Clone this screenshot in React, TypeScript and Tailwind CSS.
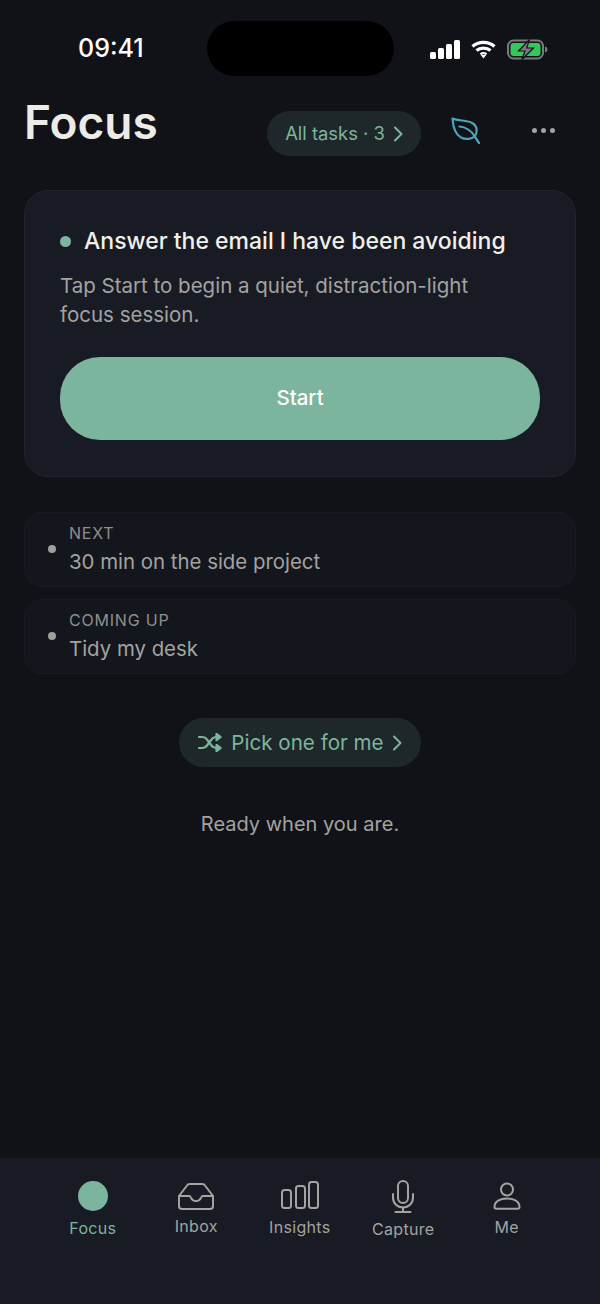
import type { ReactNode } from 'react';

function StatusIcons() {
  return (
    <div className="flex items-center">
      <svg width="30" height="19" viewBox="0 0 30 19" fill="#fff">
        <rect x="0" y="12" width="6" height="7" rx="1.5" />
        <rect x="8" y="8" width="6" height="11" rx="1.5" />
        <rect x="16" y="4" width="6" height="15" rx="1.5" />
        <rect x="24" y="0" width="6" height="19" rx="1.5" />
      </svg>
      <svg className="ml-[11px]" width="25" height="19" viewBox="0 0 25 19" fill="none" stroke="#fff" strokeWidth="3.200">
        <path d="M1.500 6.500C7.500 1 17.500 1 23.500 6.500" />
        <path d="M5.500 10.500c3.700-3.300 10.300-3.300 14 0" />
        <path d="M9.500 14.300c1.700-1.300 4.300-1.300 6 0" strokeWidth="2.200" />
        <path d="M9.800 15h5.400l-2.700 3.500z" fill="#fff" stroke="none" />
      </svg>
      <svg className="ml-[11px]" width="41" height="21" viewBox="0 0 41 21" fill="none">
        <rect x="1" y="1.500" width="35" height="18" rx="5.500" stroke="#77797c" strokeWidth="2" />
        <rect x="3.500" y="4" width="30" height="13" rx="3" fill="#34c759" />
        <path d="M38 7.500c1.700.4 2.500 1.500 2.500 3s-.8 2.600-2.500 3z" fill="#77797c" />
        <path d="M22.500 0.500L11.500 12h6.500l-3 8.500L26.500 9h-6.800z" fill="#77797c" stroke="#111318" strokeWidth="1.200" />
      </svg>
    </div>
  );
}

function Chevron({ className }: { className: string }) {
  return (
    <svg className={className} width="10" height="16" viewBox="0 0 10 16" fill="none" stroke="currentColor" strokeWidth="2" strokeLinecap="round" strokeLinejoin="round">
      <path d="M2 1.500L8.500 8L2 14.500" />
    </svg>
  );
}

function LeafIcon() {
  return (
    <svg className="mt-[6px] ml-[30px]" width="30" height="27" viewBox="0 0 30 27" fill="none" stroke="#4ea5b8" strokeWidth="2.200" strokeLinecap="round" strokeLinejoin="round">
      <path d="M1.500 1.500C8 4.500 16 2.500 22 6.500c4.500 3 4.500 9 2 12.500c-3 3-9 4-14 1.500C4.500 17.500 2 10 1.500 1.500z" />
      <path d="M8.500 9.500c6 .5 12 4.500 15 9.500c1 1.500 3 5 4.500 7" />
    </svg>
  );
}

function ShuffleIcon() {
  return (
    <svg width="24" height="19" viewBox="0 0 24 19" fill="none" stroke="currentColor" strokeWidth="2.200" strokeLinecap="round" strokeLinejoin="round">
      <path d="M1 4h3.500c2 0 3.300.8 4.500 2.500l4.500 6c1.200 1.700 2.500 2.500 4.500 2.500H21" />
      <path d="M1 15h3.500c2 0 3.300-.8 4.500-2.500l4.500-6C14.700 4.800 16 4 18 4h3" />
      <path d="M18.500 1l4 3l-4 3z" fill="currentColor" />
      <path d="M18.500 12l4 3l-4 3z" fill="currentColor" />
    </svg>
  );
}

function InboxIcon() {
  return (
    <svg width="36" height="27" viewBox="0 0 36 27" fill="none" stroke="#a3a3a0" strokeWidth="2" strokeLinejoin="round" strokeLinecap="round">
      <path d="M1 13L9 2.500C9.500 1.700 10.300 1 11.500 1h13c1.200 0 2 .7 2.500 1.500L35 13" />
      <path d="M1 13v10c0 1.700 1.300 3 3 3h28c1.700 0 3-1.300 3-3V13h-10c-1 0-1.500.5-1.800 1.300C22.500 16 21 18 18 18s-4.500-2-5.200-3.700C12.500 13.500 12 13 11 13z" />
    </svg>
  );
}

function BarsIcon() {
  return (
    <svg width="38" height="28" viewBox="0 0 38 28" fill="none" stroke="#a3a3a0" strokeWidth="2">
      <rect x="1" y="9" width="9" height="18" rx="2.500" />
      <rect x="15" y="5" width="9" height="22" rx="2.500" />
      <rect x="28" y="1" width="9" height="26" rx="2.500" />
    </svg>
  );
}

function MicIcon() {
  return (
    <svg width="22" height="33" viewBox="0 0 22 33" fill="none" stroke="#a3a3a0" strokeWidth="2" strokeLinecap="round">
      <rect x="6" y="1" width="10" height="22" rx="5" />
      <path d="M1 14v3.500C1 23.500 5.500 27.500 11 27.500s10-4 10-10V14" />
      <path d="M11 27.500V32M3.500 32h15" />
    </svg>
  );
}

function PersonIcon() {
  return (
    <svg width="28" height="28" viewBox="0 0 28 28" fill="none" stroke="#a3a3a0" strokeWidth="2">
      <circle cx="14" cy="7.500" r="6" />
      <path d="M1.500 25c0-5.500 5.500-8.500 12.500-8.500s12.500 3 12.500 8.500c0 1-.7 1.800-1.800 1.800H3.300c-1.100 0-1.800-.8-1.800-1.800z" />
    </svg>
  );
}

function QueueRow({ label, title }: { label: string; title: string }) {
  return (
    <div className="flex h-[75px] items-center rounded-[18px] border border-[#181b23] bg-[#13161c] pl-[23px]">
      <span className="mb-[2px] h-2 w-2 rounded-full bg-[#a09f9b]" />
      <div className="ml-[13px] pt-[1px]">
        <p className="text-[16px] leading-[20px] tracking-[0.8px] text-[#8f8f8c]">{label}</p>
        <p className="mt-[4px] text-[20.400px] leading-[30px] text-[#a3a3a0]">{title}</p>
      </div>
    </div>
  );
}

function TabItem({ icon, label, active, iconClass, labelClass }: { icon: ReactNode; label: string; active?: boolean; iconClass: string; labelClass: string }) {
  return (
    <div className="flex w-[103.500px] flex-col items-center">
      <div className={`flex items-end justify-center ${iconClass}`}>{icon}</div>
      <span className={`text-[16px] leading-[20px] tracking-[0.3px] ${labelClass} ${active ? 'text-[#7cb59d]' : 'text-[#a3a3a0]'}`}>{label}</span>
    </div>
  );
}

export default function App() {
  return (
    <div className="flex h-[1304px] w-[600px] flex-col overflow-hidden bg-[#101217] font-['Inter',sans-serif]">
      {/* status bar */}
      <div className="flex h-[76px] items-start pt-[21px]">
        <div className="w-[207px] pt-[11px] pl-[78px] text-[25px] leading-[32px] font-medium text-white">09:41</div>
        <div className="h-[55px] w-[187px] rounded-[28px] bg-black" />
        <div className="pt-[18px] pl-[36px]">
          <StatusIcons />
        </div>
      </div>

      {/* header */}
      <div className="mt-[18px] flex h-[60px] items-start pl-[24px]">
        <h1 className="w-[243px] text-[46px] leading-[56px] font-semibold text-[#ecebe6]">Focus</h1>
        <div className="mt-[17px] flex h-[45px] w-[154px] items-center justify-center gap-[8px] rounded-full bg-[#1e2729] text-[18.400px] text-[#7cb59d]">
          All tasks · 3
          <Chevron className="shrink-0" />
        </div>
        <div className="mt-[17px]">
          <LeafIcon />
        </div>
        <div className="mt-[34px] ml-[51px] flex gap-[4px]">
          <span className="h-[5px] w-[5px] rounded-full bg-[#a3a3a0]" />
          <span className="h-[5px] w-[5px] rounded-full bg-[#a3a3a0]" />
          <span className="h-[5px] w-[5px] rounded-full bg-[#a3a3a0]" />
        </div>
      </div>

      {/* current task */}
      <div className="mx-[24px] mt-[36px] h-[287px] rounded-[24px] border border-[#20232d] bg-[#181b23] px-[35px] pt-[35px]">
        <div className="flex items-center">
          <span className="h-[11px] w-[11px] rounded-full bg-[#7cb59d]" />
          <p className="ml-[13px] text-[23px] leading-[30px] font-[450] text-[#f0efea]">Answer the email I have been avoiding</p>
        </div>
        <p className="mt-[16px] max-w-[440px] text-[20.500px] leading-[28.500px] text-[#a3a3a0]">
          Tap Start to begin a quiet, distraction-light focus session.
        </p>
        <button className="mt-[28px] flex h-[83px] w-full items-center justify-center rounded-[40px] bg-[#7cb59d] text-[20.500px] font-medium text-white">
          Start
        </button>
      </div>

      {/* up next */}
      <div className="mx-[24px] mt-[35px] flex flex-col gap-[12px]">
        <QueueRow label="NEXT" title="30 min on the side project" />
        <QueueRow label="COMING UP" title="Tidy my desk" />
      </div>

      <div className="mt-[44px] flex justify-center">
        <button className="flex h-[49px] w-[242px] items-center justify-center rounded-full bg-[#1e2729] text-[20.600px] text-[#7cb59d]">
          <ShuffleIcon />
          <span className="mr-[8px] ml-[9px] pt-[1px]">Pick one for me</span>
          <Chevron className="shrink-0" />
        </button>
      </div>

      <p className="mt-[43px] text-center text-[20px] leading-[28px] text-[#a3a3a0]">Ready when you are.</p>

      {/* tab bar */}
      <div className="mt-auto flex h-[146px] bg-[#181b23] pt-[22px] pl-[41px]">
        <TabItem active icon={<span className="h-[30px] w-[30px] rounded-full bg-[#7cb59d]" />} label="Focus" iconClass="h-[30px] mt-[1px]" labelClass="mt-[7px]" />
        <TabItem icon={<InboxIcon />} label="Inbox" iconClass="h-[27px] mt-[3px]" labelClass="mt-[6px]" />
        <TabItem icon={<BarsIcon />} label="Insights" iconClass="h-[28px] mt-[1px]" labelClass="mt-[8px]" />
        <TabItem icon={<MicIcon />} label="Capture" iconClass="h-[33px]" labelClass="mt-[6px]" />
        <TabItem icon={<PersonIcon />} label="Me" iconClass="h-[28px] mt-[2px]" labelClass="mt-[7px]" />
      </div>
    </div>
  );
}
